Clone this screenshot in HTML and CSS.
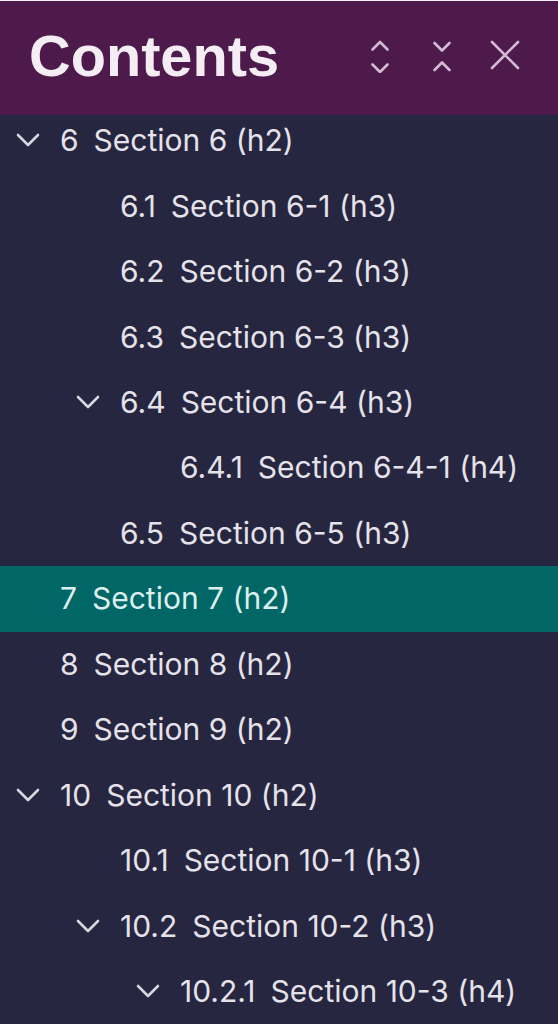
FILE: index.html
```html
<!DOCTYPE html>
<html>
<head>
<meta charset="utf-8">
<link rel="stylesheet" href="styles.css">
</head>
<body>
<div class="panel">
  <header class="header">
    <h1 class="title">Contents</h1>
    <div class="actions">
      <button class="icon-btn expand" aria-label="Expand all">
        <svg width="22" height="36" viewBox="0 0 22 36"><path d="M3.5 12.5 L11 5 L18.5 12.5 M3.5 27.5 L11 35 L18.5 27.5"/></svg>
      </button>
      <button class="icon-btn collapse" aria-label="Collapse all">
        <svg width="22" height="36" viewBox="0 0 22 36"><path d="M3.5 6 L11 13.5 L18.5 6 M3.5 33 L11 25.5 L18.5 33"/></svg>
      </button>
      <button class="icon-btn close" aria-label="Close">
        <svg width="32" height="32" viewBox="0 0 32 32"><path d="M3 3 L29 29 M29 3 L3 29"/></svg>
      </button>
    </div>
  </header>
  <ul class="toc">
    <li class="row lvl2"><span class="toggle"><svg viewBox="0 0 24 14"><path d="M2 2 L12 12 L22 2"/></svg></span><span class="num">6</span><span class="label">Section 6 (h2)</span></li>
    <li class="row lvl3"><span class="toggle"></span><span class="num">6.1</span><span class="label">Section 6-1 (h3)</span></li>
    <li class="row lvl3"><span class="toggle"></span><span class="num">6.2</span><span class="label">Section 6-2 (h3)</span></li>
    <li class="row lvl3"><span class="toggle"></span><span class="num">6.3</span><span class="label">Section 6-3 (h3)</span></li>
    <li class="row lvl3"><span class="toggle"><svg viewBox="0 0 24 14"><path d="M2 2 L12 12 L22 2"/></svg></span><span class="num">6.4</span><span class="label">Section 6-4 (h3)</span></li>
    <li class="row lvl4"><span class="toggle"></span><span class="num">6.4.1</span><span class="label">Section 6-4-1 (h4)</span></li>
    <li class="row lvl3"><span class="toggle"></span><span class="num">6.5</span><span class="label">Section 6-5 (h3)</span></li>
    <li class="row lvl2 active"><span class="toggle"></span><span class="num">7</span><span class="label">Section 7 (h2)</span></li>
    <li class="row lvl2"><span class="toggle"></span><span class="num">8</span><span class="label">Section 8 (h2)</span></li>
    <li class="row lvl2"><span class="toggle"></span><span class="num">9</span><span class="label">Section 9 (h2)</span></li>
    <li class="row lvl2"><span class="toggle"><svg viewBox="0 0 24 14"><path d="M2 2 L12 12 L22 2"/></svg></span><span class="num">10</span><span class="label">Section 10 (h2)</span></li>
    <li class="row lvl3"><span class="toggle"></span><span class="num">10.1</span><span class="label">Section 10-1 (h3)</span></li>
    <li class="row lvl3"><span class="toggle"><svg viewBox="0 0 24 14"><path d="M2 2 L12 12 L22 2"/></svg></span><span class="num">10.2</span><span class="label">Section 10-2 (h3)</span></li>
    <li class="row lvl4"><span class="toggle"><svg viewBox="0 0 24 14"><path d="M2 2 L12 12 L22 2"/></svg></span><span class="num">10.2.1</span><span class="label">Section 10-3 (h4)</span></li>
  </ul>
</div>
</body>
</html>
```

FILE: styles.css
```css
html, body {
  margin: 0;
  padding: 0;
  background: #262640;
  height: 1024px;
  overflow: hidden;
}
.panel {
  border-top: 1px solid #f2eff2;
}
.header {
  position: relative;
  z-index: 2;
  height: 114px;
  background: #4d1a4b;
  display: flex;
  align-items: center;
  justify-content: space-between;
  padding: 0 37px 0 28px;
  box-sizing: border-box;
}
.title {
  margin: 0;
  font-family: "Liberation Sans", Arial, sans-serif;
  font-weight: 700;
  font-size: 57.7px;
  color: #f4eef4;
  line-height: 1;
  padding-left: 1px;
  padding-bottom: 3px;
}
.actions {
  display: flex;
  align-items: center;
  margin-top: -6px;
}
.icon-btn {
  background: none;
  border: 0;
  padding: 0;
  display: flex;
  align-items: center;
  justify-content: center;
}
.icon-btn svg path {
  fill: none;
  stroke: #d3bbd3;
  stroke-width: 2.6;
  stroke-linecap: round;
  stroke-linejoin: round;
}
.expand { width: 22px; margin-right: 40px; }
.collapse { width: 22px; margin-right: 36.5px; }
.close { width: 32px; }
.toc {
  list-style: none;
  margin: -7px 0 0 0;
  padding: 0;
  font-family: Inter, "Noto Sans", sans-serif;
  font-size: 30px;
  color: #e5e2ea;
}
.row {
  height: 65.46px;
  display: flex;
  align-items: center;
  box-sizing: border-box;
  padding-bottom: 1px;
}
.lvl2 { padding-left: 0; }
.lvl3 { padding-left: 60px; }
.lvl4 { padding-left: 120px; }
.toggle {
  width: 60px;
  flex: none;
  display: flex;
  align-items: center;
}
.toggle svg {
  width: 24px;
  height: 14px;
  margin-left: 16px;
}
.toggle svg path {
  fill: none;
  stroke: #d9d6e0;
  stroke-width: 2.6;
  stroke-linecap: round;
  stroke-linejoin: round;
}
.num {
  margin-right: 15px;
}
.active {
  background: #006666;
  color: #dcefee;
}
```
